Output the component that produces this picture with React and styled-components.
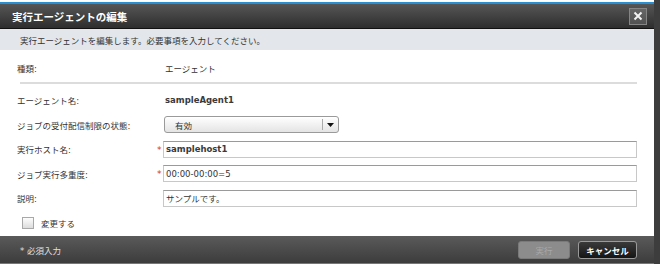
import React from "react";
import styled, { createGlobalStyle } from "styled-components";

const GlobalStyle = createGlobalStyle`
  html, body { margin: 0; padding: 0; background: #fff; }
  body {
    font-family: "DejaVu Sans", "Noto Sans CJK JP", sans-serif;
    font-size: 8.5px;
    color: #333;
  }
`;

const Page = styled.div`
  display: flex;
  width: 660px;
  height: 264px;
  overflow: hidden;
`;

const Dialog = styled.div`
  width: 654px;
  display: flex;
  flex-direction: column;
  background: #fff;
  padding-top: 2px;
`;

const Strip = styled.div`
  flex: 1;
  background: #3d3d3d;
`;

const TitleBar = styled.div`
  height: 24px;
  border-top: 2px solid #2a8fd2;
  border-bottom: 1px solid #111;
  background: linear-gradient(#565656, #2e2e2e);
  display: flex;
  align-items: center;
  justify-content: space-between;
  padding: 0 7px 0 12px;
`;

const Title = styled.h1`
  margin: 0;
  font-size: 10.5px;
  font-weight: bold;
  color: #fff;
`;

const CloseButton = styled.div`
  width: 16px;
  height: 15px;
  border: 1px solid #858585;
  background: linear-gradient(#666, #525252);
  display: flex;
  align-items: center;
  justify-content: center;
`;

const DescBar = styled.div`
  height: 21px;
  background: #e3e6ea;
  display: flex;
  align-items: center;
  padding-left: 20px;
  color: #333;
`;

const Body = styled.div`
  flex: 1;
  padding: 6px 17px 0 17px;
  display: flex;
  flex-direction: column;
`;

const Row = styled.div`
  display: flex;
  align-items: center;
  height: ${(p) => p.$h || "24.5px"};
  flex-shrink: 0;
`;

const Label = styled.div`
  width: 140px;
  color: #333;
`;

const Mark = styled.div`
  width: 6px;
  color: #d2303a;
  font-size: 9px;
  line-height: 1;
  padding-top: 2px;
`;

const Value = styled.div`
  padding-left: 2px;
  color: ${(p) => (p.$strong ? "#3a3a3a" : "#333")};
  font-weight: ${(p) => (p.$strong ? "bold" : "normal")};
`;

const Separator = styled.div`
  height: 2px;
  background: #dcdcdc;
  margin: 2px 0 4px 3px;
  flex-shrink: 0;
`;

const Select = styled.div`
  margin-left: 1px;
  width: 173px;
  height: 15px;
  border: 1px solid #9a9a9a;
  border-radius: 3px;
  background: linear-gradient(#ffffff, #e4e4e4);
  display: flex;
  align-items: center;
  box-shadow: inset 0 1px 0 #fff;
`;

const SelectText = styled.div`
  flex: 1;
  padding-left: 10px;
  color: #333;
`;

const SelectArrow = styled.div`
  width: 15px;
  height: 11px;
  border-left: 1px solid #aaa;
  display: flex;
  align-items: center;
  justify-content: center;
`;

const Input = styled.div`
  flex: 1;
  height: 15px;
  border: 1px solid #c8c8c8;
  border-top-color: #9a9a9a;
  background: #fff;
  display: flex;
  align-items: center;
  padding-left: 2px;
  color: ${(p) => (p.$strong ? "#3a3a3a" : "#333")};
  font-weight: ${(p) => (p.$strong ? "bold" : "normal")};
`;

const CheckRow = styled.label`
  display: flex;
  align-items: center;
  gap: 7px;
  margin-left: 5px;
  color: #333;
`;

const CheckBox = styled.span`
  width: 10px;
  height: 10px;
  border: 1px solid #a8a8a8;
  background: linear-gradient(#fdfdfd, #dcdcdc);
  display: inline-block;
`;

const Footer = styled.div`
  height: 27px;
  background: linear-gradient(#5a5a5a, #3c3c3c);
  border-bottom: 1px solid #777;
  display: flex;
  align-items: center;
  justify-content: space-between;
  padding: 0 17px 0 20px;
`;

const FooterNote = styled.div`
  color: #e0e0e0;
`;

const Buttons = styled.div`
  display: flex;
  align-items: center;
  gap: 8px;
`;

const Button = styled.div`
  height: 16px;
  width: ${(p) => p.$w};
  border-radius: 3px;
  display: flex;
  align-items: center;
  justify-content: center;
  font-weight: ${(p) => (p.$primary ? "bold" : "normal")};
  color: ${(p) => (p.$primary ? "#fff" : "#a8a8a8")};
  border: 1px solid ${(p) => (p.$primary ? "#9a9a9a" : "#7a7a7a")};
  background: ${(p) =>
    p.$primary ? "linear-gradient(#3a3a3a, #151515)" : "#8c8c8c"};
`;

export default function App() {
  return (
    <>
      <GlobalStyle />
      <Page>
        <Dialog>
          <TitleBar>
            <Title>実行エージェントの編集</Title>
            <CloseButton>
              <svg width="10" height="10" viewBox="0 0 10 10">
                <path d="M1.5 1.5 L8.5 8.5 M8.5 1.5 L1.5 8.5" stroke="#f2f2f2" strokeWidth="2" />
              </svg>
            </CloseButton>
          </TitleBar>
          <DescBar>実行エージェントを編集します。必要事項を入力してください。</DescBar>
          <Body>
            <Row $h="24px">
              <Label>種類:</Label>
              <Mark />
              <Value>エージェント</Value>
            </Row>
            <Separator />
            <Row>
              <Label>エージェント名:</Label>
              <Mark />
              <Value $strong>sampleAgent1</Value>
            </Row>
            <Row>
              <Label>ジョブの受付配信制限の状態:</Label>
              <Mark />
              <Select>
                <SelectText>有効</SelectText>
                <SelectArrow>
                  <svg width="7" height="4" viewBox="0 0 7 4">
                    <path d="M0 0 H7 L3.5 4 Z" fill="#111" />
                  </svg>
                </SelectArrow>
              </Select>
            </Row>
            <Row>
              <Label>実行ホスト名:</Label>
              <Mark>*</Mark>
              <Input $strong>samplehost1</Input>
            </Row>
            <Row>
              <Label>ジョブ実行多重度:</Label>
              <Mark>*</Mark>
              <Input>00:00-00:00=5</Input>
            </Row>
            <Row>
              <Label>説明:</Label>
              <Mark />
              <Input>サンプルです。</Input>
            </Row>
            <Row>
              <CheckRow>
                <CheckBox />
                変更する
              </CheckRow>
            </Row>
          </Body>
          <Footer>
            <FooterNote>* 必須入力</FooterNote>
            <Buttons>
              <Button $w="50px">実行</Button>
              <Button $w="57px" $primary>キャンセル</Button>
            </Buttons>
          </Footer>
        </Dialog>
        <Strip />
      </Page>
    </>
  );
}
